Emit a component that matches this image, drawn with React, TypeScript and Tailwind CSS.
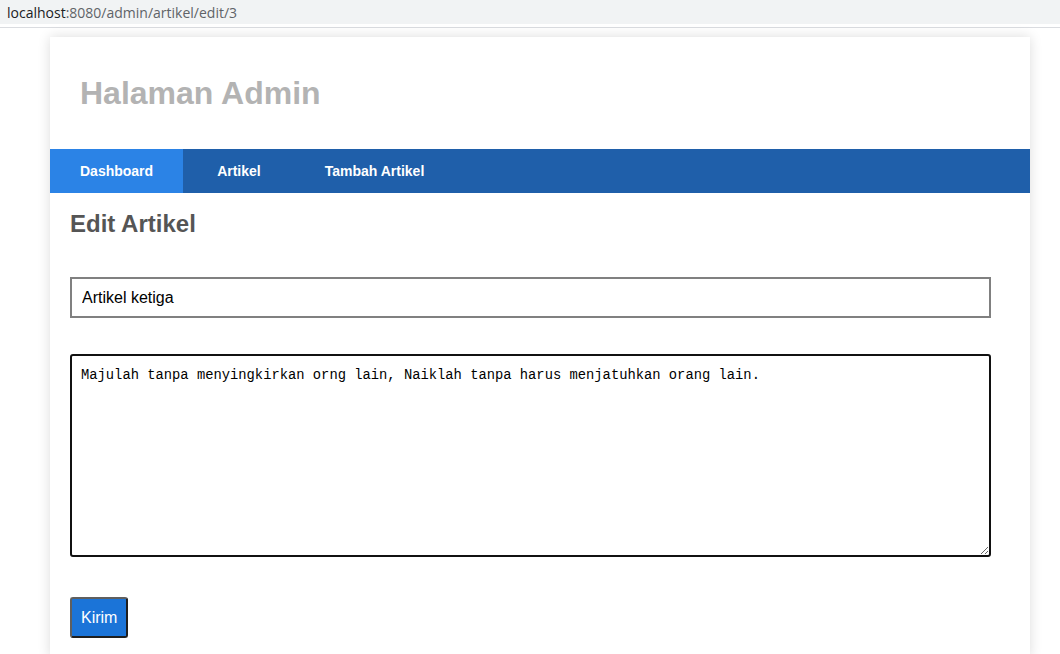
import { useState } from "react";

function App() {
  const [judul, setJudul] = useState("Artikel ketiga");
  const [isi, setIsi] = useState(
    "Majulah tanpa menyingkirkan orng lain, Naiklah tanpa harus menjatuhkan orang lain."
  );

  return (
    <div className="min-h-[654px] bg-white font-['Liberation_Sans',Arial,sans-serif]">
      {/* Address bar */}
      <div className="h-[24px] bg-[#f1f3f4] px-[7px] flex items-center text-[14px] font-['Open_Sans',sans-serif] text-[#5f6368]">
        <span className="text-[#202124]">localhost</span>
        <span>:8080/admin/artikel/edit/3</span>
      </div>
      <div className="h-[4px] bg-white border-b border-[#dadce0]" />

      {/* Container */}
      <div className="mt-[9px] ml-[50px] w-[980px] bg-white shadow-[0_0_12px_rgba(0,0,0,0.14)]">
        <header className="h-[112px] px-[30px] flex items-center">
          <h1 className="text-[32px] font-bold text-[#b3b3b3]">Halaman Admin</h1>
        </header>

        <nav className="h-[44px] bg-[#1f5faa] flex gap-[4px] text-[14px] font-bold text-white">
          <a className="px-[30px] flex items-center bg-[#2b83e6]">Dashboard</a>
          <a className="px-[30px] flex items-center">Artikel</a>
          <a className="px-[30px] flex items-center">Tambah Artikel</a>
        </nav>

        <section className="px-[20px] pt-[17px] pb-[20px]">
          <h2 className="text-[24px] leading-[28px] font-bold text-[#555]">Edit Artikel</h2>

          <form className="mt-[39px]" onSubmit={(e) => e.preventDefault()}>
            <input
              value={judul}
              onChange={(e) => setJudul(e.target.value)}
              className="block w-[921px] h-[41px] border-2 border-[#808080] px-[10px] text-[16px] text-black outline-none"
            />
            <textarea
              value={isi}
              onChange={(e) => setIsi(e.target.value)}
              spellCheck={false}
              className="block mt-[36px] w-[921px] h-[203px] border-2 border-[#111] rounded-[3px] px-[9px] py-[10px] text-[13.8px] leading-[19px] font-['Liberation_Mono',monospace] text-black outline-none"
            />
            <button
              type="submit"
              className="mt-[40px] h-[41px] px-[9px] border-2 border-[#5f5f5f] border-r-[#1e1e1e] border-b-[#1e1e1e] rounded-[3px] bg-[#1b74d8] text-white text-[16px]"
            >
              Kirim
            </button>
          </form>
        </section>
      </div>
    </div>
  );
}

export default App;
